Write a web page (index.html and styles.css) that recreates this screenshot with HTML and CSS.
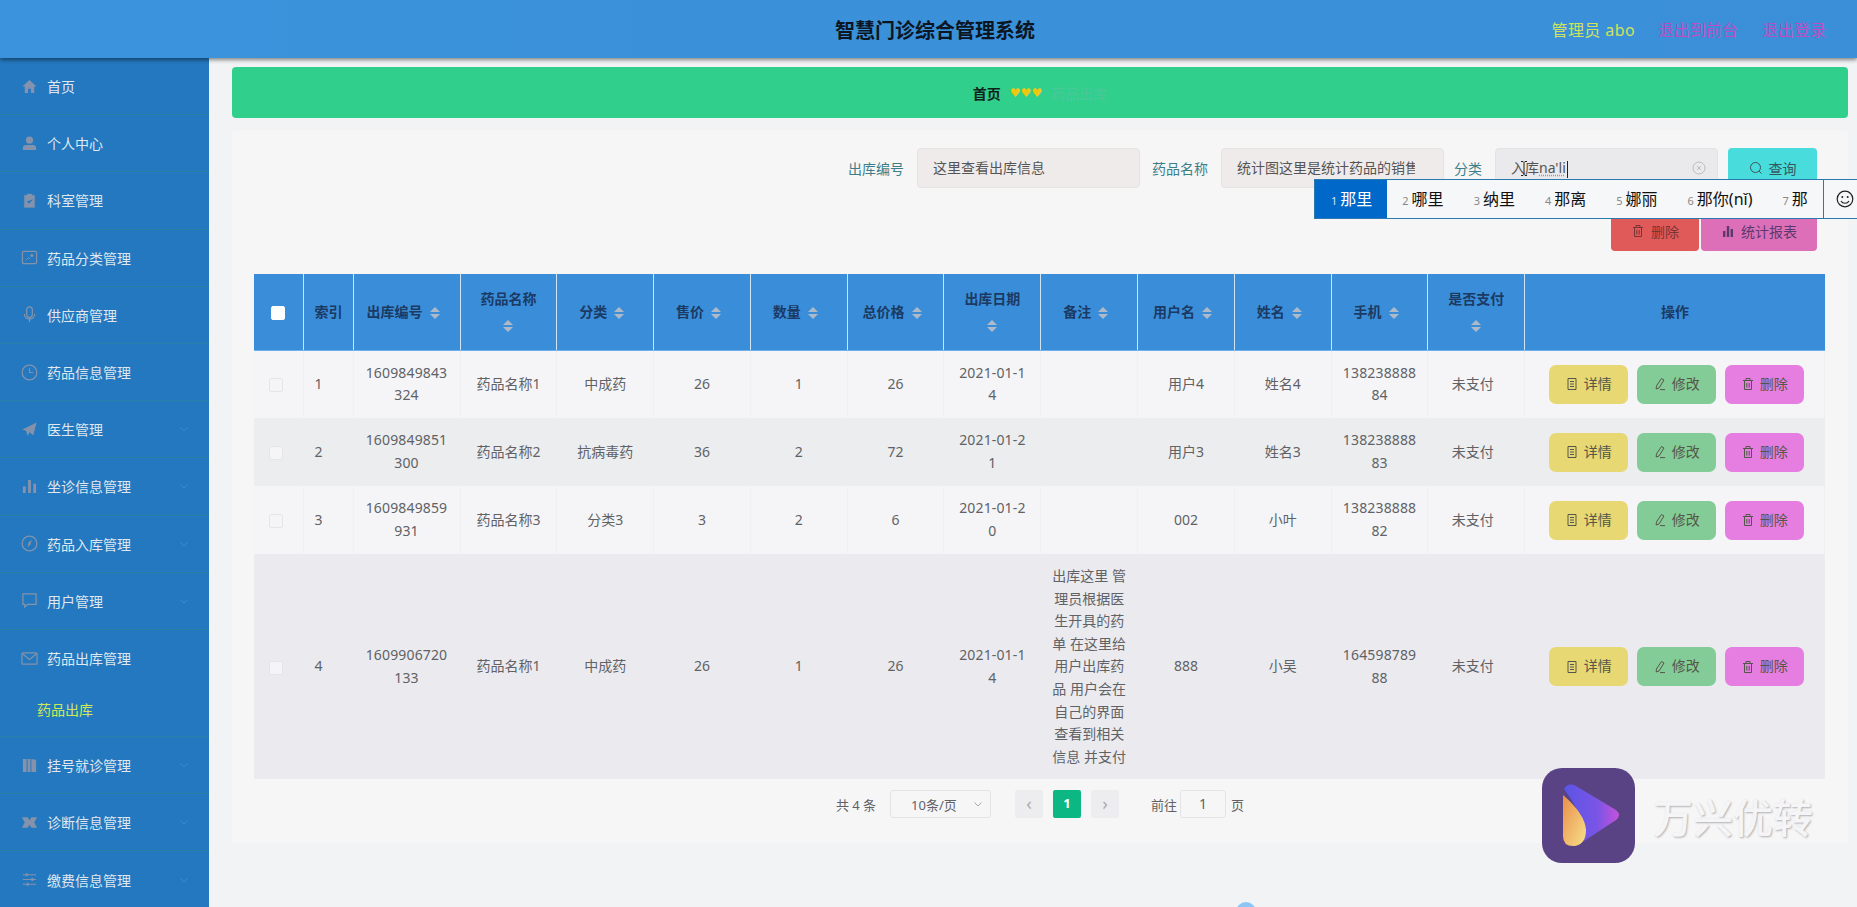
FILE: index.html
```html
<!DOCTYPE html>
<html lang="zh-CN">
<head>
    <meta charset="UTF-8">
    <meta name="viewport" content="width=device-width, initial-scale=1.0">
    <title>智慧门诊综合管理系统</title>
    <link rel="stylesheet" href="styles.css">
</head>
<body>
    <svg class="sprite" width="0" height="0">
        <symbol id="i-doc" viewBox="0 0 14 14"><path d="M3 1.500h8v11H3zM5 4.500h4M5 7h4M5 9.500h4" fill="none" stroke="currentColor"/></symbol>
        <symbol id="i-edit" viewBox="0 0 14 14"><path d="M8.500 1.500l2.500 1.500-5 8-2.800 1 .2-3zM7 12.600h5" fill="none" stroke="currentColor"/></symbol>
        <symbol id="i-trash" viewBox="0 0 14 14"><path d="M2 3.500h10M5 3.500V1.500h4v2M3.500 3.500v9h7v-9M5.800 6v4.500M8.200 6v4.500" fill="none" stroke="currentColor"/></symbol>
        <symbol id="i-chart" viewBox="0 0 14 14"><path d="M2 7h2.400v6H2zM5.800 2h2.400v11H5.800zM9.600 5H12v8H9.600z" fill="currentColor"/></symbol>
        <symbol id="i-search" viewBox="0 0 14 14"><circle cx="6.500" cy="6.500" r="5" fill="none" stroke="currentColor"/><path d="M10 10l2.500 2.500" stroke="currentColor"/></symbol>
        <symbol id="i-chev" viewBox="0 0 12 12"><path d="M2.500 4.500L6 8l3.500-3.500" fill="none" stroke="currentColor"/></symbol>
    </svg>

    <header class="topbar">
        <div></div>
        <h1 class="title">智慧门诊综合管理系统</h1>
        <div class="user-links">
            <span class="admin">管理员 abo</span>
            <a class="link">退出到前台</a>
            <a class="link">退出登录</a>
        </div>
    </header>

    <div class="layout">
        <nav class="sidebar">
            <div class="nav-item">
                <svg class="nav-icon" viewBox="0 0 18 18"><path d="M9 2L1.500 9H4v7h3.500v-4.500h3V16H14V9h2.500z" fill="currentColor"/></svg>首页
            </div>
            <div class="nav-item">
                <svg class="nav-icon" viewBox="0 0 18 18"><circle cx="9" cy="5.500" r="3.800" fill="currentColor"/><path d="M2 16v-2.500c0-2 1.500-3 3.500-3h7c2 0 3.500 1 3.500 3V16z" fill="currentColor"/></svg>个人中心
            </div>
            <div class="nav-item">
                <svg class="nav-icon" viewBox="0 0 18 18"><path d="M3 3h3V1.500h6V3h3v14H3zM6.500 10l2 2 3.500-4" fill="currentColor" stroke="#2478bf" stroke-width=".8"/></svg>科室管理
            </div>
            <div class="nav-item">
                <svg class="nav-icon" viewBox="0 0 18 18"><rect x="1.500" y="2.500" width="15" height="13" rx="1.500" fill="none" stroke="currentColor" stroke-width="1.300"/><circle cx="11.500" cy="7" r="1.600" fill="currentColor"/><path d="M5 12l3-3 2 2" fill="none" stroke="currentColor"/></svg>药品分类管理
            </div>
            <div class="nav-item">
                <svg class="nav-icon" viewBox="0 0 18 18"><rect x="6" y="1" width="6" height="11" rx="3" fill="none" stroke="currentColor" stroke-width="1.300"/><path d="M3.500 8.500c0 7 11 7 11 0M9 14v3" fill="none" stroke="currentColor" stroke-width="1.300"/></svg>供应商管理
            </div>
            <div class="nav-item">
                <svg class="nav-icon" viewBox="0 0 18 18"><circle cx="9" cy="9" r="7.800" fill="none" stroke="currentColor" stroke-width="1.300"/><path d="M9 4.500V9h4" fill="none" stroke="currentColor" stroke-width="1.200"/></svg>药品信息管理
            </div>
            <div class="nav-item has-sub">
                <svg class="nav-icon" viewBox="0 0 18 18"><path d="M16.500 1.500L13 15l-4-3-2 4-1.500-5.500L1.500 9z" fill="currentColor"/></svg>医生管理
                <svg class="nav-chev"><use href="#i-chev"/></svg>
            </div>
            <div class="nav-item has-sub">
                <svg class="nav-icon" viewBox="0 0 18 18"><path d="M2 9h3v7H2zM7.500 2h3v14h-3zM13 6h3v10h-3z" fill="currentColor"/></svg>坐诊信息管理
                <svg class="nav-chev"><use href="#i-chev"/></svg>
            </div>
            <div class="nav-item has-sub">
                <svg class="nav-icon" viewBox="0 0 18 18"><circle cx="9" cy="9" r="7.800" fill="none" stroke="currentColor" stroke-width="1.300"/><path d="M11.500 5L10 10l-3 3 1-5z" fill="currentColor"/></svg>药品入库管理
                <svg class="nav-chev"><use href="#i-chev"/></svg>
            </div>
            <div class="nav-item has-sub">
                <svg class="nav-icon" viewBox="0 0 18 18"><path d="M2 2h14v11H7l-3 3v-3H2z" fill="none" stroke="currentColor" stroke-width="1.300"/></svg>用户管理
                <svg class="nav-chev"><use href="#i-chev"/></svg>
            </div>
            <div class="nav-item open">
                <svg class="nav-icon" viewBox="0 0 18 18"><rect x="1" y="3" width="16" height="12" rx="1" fill="none" stroke="currentColor" stroke-width="1.300"/><path d="M1.500 4L9 10l7.500-6" fill="none" stroke="currentColor" stroke-width="1.300"/></svg>药品出库管理
            </div>
            <div class="nav-sub">药品出库</div>
            <div class="nav-item has-sub">
                <svg class="nav-icon" viewBox="0 0 18 18"><path d="M2 2h4v14H2zM7 2h3v14H7zM11 2l5 1v13h-5z" fill="currentColor"/></svg>挂号就诊管理
                <svg class="nav-chev"><use href="#i-chev"/></svg>
            </div>
            <div class="nav-item has-sub">
                <svg class="nav-icon" viewBox="0 0 18 18"><path d="M1 3.500h6l2 3 2-3h6l-3 5.500 3 5.500h-6l-2-3-2 3H1l3-5.500z" fill="currentColor"/></svg>诊断信息管理
                <svg class="nav-chev"><use href="#i-chev"/></svg>
            </div>
            <div class="nav-item has-sub">
                <svg class="nav-icon" viewBox="0 0 18 18"><path d="M2 4h14M2 9h14M2 14h14" stroke="currentColor" stroke-width="1.200"/><path d="M5 2.500h2v3H5zM11 7.500h2v3h-2zM6 12.500h2v3H6z" fill="currentColor"/></svg>缴费信息管理
                <svg class="nav-chev"><use href="#i-chev"/></svg>
            </div>
        </nav>

        <main class="main">
            <div class="crumb">
                <b>首页</b>
                <span class="hearts">♥♥♥</span>
                <span class="crumb-now">药品出库</span>
            </div>

            <section class="panel">
                <div class="search-row">
                    <label class="field-label">出库编号</label>
                    <div class="field field-first">这里查看出库信息</div>
                    <label class="field-label">药品名称</label>
                    <div class="field field-clip"><span>统计图这里是统计药品的销售情况</span></div>
                    <label class="field-label">分类</label>
                    <div class="field field-active">
                        <span>入库<u>na'li</u></span><i class="caret"></i>
                        <svg class="ibeam" viewBox="0 0 8 16"><path d="M1 1h2l1 1 1-1h2M4 2v12M1 15h2l1-1 1 1h2" fill="none" stroke="#222"/></svg>
                        <svg class="clear" viewBox="0 0 14 14"><circle cx="7" cy="7" r="6" fill="none" stroke="#bbb"/><path d="M5 5l4 4M9 5l-4 4" stroke="#bbb"/></svg>
                    </div>
                    <button class="btn btn-query"><svg class="btn-icon"><use href="#i-search"/></svg>查询</button>
                </div>
                <div class="tool-row">
                    <button class="btn btn-remove"><svg class="btn-icon"><use href="#i-trash"/></svg>删除</button>
                    <button class="btn btn-report"><svg class="btn-icon"><use href="#i-chart"/></svg>统计报表</button>
                </div>

                <table class="data-table">
                    <colgroup>
                        <col class="col-check"><col class="col-idx"><col class="col-id">
                        <col class="col-n"><col class="col-n"><col class="col-n"><col class="col-n"><col class="col-n"><col class="col-n">
                        <col class="col-n"><col class="col-n"><col class="col-n"><col class="col-n"><col class="col-n">
                        <col class="col-ops">
                    </colgroup>
                    <thead>
                        <tr>
                            <th><span class="check check-head"></span></th>
                            <th class="left">索引</th>
                            <th>出库编号<span class="sort"></span></th>
                            <th>药品名称<span class="sort"></span></th>
                            <th>分类<span class="sort"></span></th>
                            <th>售价<span class="sort"></span></th>
                            <th>数量<span class="sort"></span></th>
                            <th>总价格<span class="sort"></span></th>
                            <th>出库日期<span class="sort"></span></th>
                            <th>备注<span class="sort"></span></th>
                            <th>用户名<span class="sort"></span></th>
                            <th>姓名<span class="sort"></span></th>
                            <th>手机<span class="sort"></span></th>
                            <th>是否支付<span class="sort"></span></th>
                            <th>操作</th>
                        </tr>
                    </thead>
                    <tbody>
                        <tr>
                            <td><span class="check"></span></td>
                            <td class="left">1</td>
                            <td class="num">1609849843<br>324</td>
                            <td>药品名称1</td>
                            <td>中成药</td>
                            <td>26</td>
                            <td>1</td>
                            <td>26</td>
                            <td class="num">2021-01-1<br>4</td>
                            <td></td>
                            <td>用户4</td>
                            <td>姓名4</td>
                            <td class="num">138238888<br>84</td>
                            <td class="pay">未支付</td>
                            <td class="ops">
                                <button class="act act-view"><svg class="btn-icon"><use href="#i-doc"/></svg>详情</button>
                                <button class="act act-edit"><svg class="btn-icon"><use href="#i-edit"/></svg>修改</button>
                                <button class="act act-del"><svg class="btn-icon"><use href="#i-trash"/></svg>删除</button>
                            </td>
                        </tr>
                        <tr>
                            <td><span class="check"></span></td>
                            <td class="left">2</td>
                            <td class="num">1609849851<br>300</td>
                            <td>药品名称2</td>
                            <td>抗病毒药</td>
                            <td>36</td>
                            <td>2</td>
                            <td>72</td>
                            <td class="num">2021-01-2<br>1</td>
                            <td></td>
                            <td>用户3</td>
                            <td>姓名3</td>
                            <td class="num">138238888<br>83</td>
                            <td class="pay">未支付</td>
                            <td class="ops">
                                <button class="act act-view"><svg class="btn-icon"><use href="#i-doc"/></svg>详情</button>
                                <button class="act act-edit"><svg class="btn-icon"><use href="#i-edit"/></svg>修改</button>
                                <button class="act act-del"><svg class="btn-icon"><use href="#i-trash"/></svg>删除</button>
                            </td>
                        </tr>
                        <tr>
                            <td><span class="check"></span></td>
                            <td class="left">3</td>
                            <td class="num">1609849859<br>931</td>
                            <td>药品名称3</td>
                            <td>分类3</td>
                            <td>3</td>
                            <td>2</td>
                            <td>6</td>
                            <td class="num">2021-01-2<br>0</td>
                            <td></td>
                            <td>002</td>
                            <td>小叶</td>
                            <td class="num">138238888<br>82</td>
                            <td class="pay">未支付</td>
                            <td class="ops">
                                <button class="act act-view"><svg class="btn-icon"><use href="#i-doc"/></svg>详情</button>
                                <button class="act act-edit"><svg class="btn-icon"><use href="#i-edit"/></svg>修改</button>
                                <button class="act act-del"><svg class="btn-icon"><use href="#i-trash"/></svg>删除</button>
                            </td>
                        </tr>
                        <tr>
                            <td><span class="check"></span></td>
                            <td class="left">4</td>
                            <td class="num">1609906720<br>133</td>
                            <td>药品名称1</td>
                            <td>中成药</td>
                            <td>26</td>
                            <td>1</td>
                            <td>26</td>
                            <td class="num">2021-01-1<br>4</td>
                            <td>出库这里 管<br>理员根据医<br>生开具的药<br>单 在这里给<br>用户出库药<br>品 用户会在<br>自己的界面<br>查看到相关<br>信息 并支付</td>
                            <td>888</td>
                            <td>小吴</td>
                            <td class="num">164598789<br>88</td>
                            <td class="pay">未支付</td>
                            <td class="ops">
                                <button class="act act-view"><svg class="btn-icon"><use href="#i-doc"/></svg>详情</button>
                                <button class="act act-edit"><svg class="btn-icon"><use href="#i-edit"/></svg>修改</button>
                                <button class="act act-del"><svg class="btn-icon"><use href="#i-trash"/></svg>删除</button>
                            </td>
                        </tr>
                    </tbody>
                </table>

                <div class="pager">
                    <span class="pager-total">共 4 条</span>
                    <div class="pager-size">10条/页<svg class="pager-chev"><use href="#i-chev"/></svg></div>
                    <span class="page-btn page-arrow">‹</span>
                    <span class="page-btn page-on">1</span>
                    <span class="page-btn page-arrow">›</span>
                    <span class="pager-goto">前往</span>
                    <span class="pager-input">1</span>
                    <span>页</span>
                </div>
            </section>
        </main>
    </div>

    <!-- 输入法候选框 -->
    <div class="ime">
        <div class="ime-item ime-on"><small>1</small>那里</div>
        <div class="ime-item"><small>2</small>哪里</div>
        <div class="ime-item"><small>3</small>纳里</div>
        <div class="ime-item"><small>4</small>那离</div>
        <div class="ime-item"><small>5</small>娜丽</div>
        <div class="ime-item"><small>6</small>那你(nǐ)</div>
        <div class="ime-item"><small>7</small>那</div>
        <div class="ime-emoji">
            <svg viewBox="0 0 18 18" width="18" height="18"><circle cx="9" cy="9" r="7.800" fill="none" stroke="#222" stroke-width="1.200"/><circle cx="6.300" cy="7" r="1" fill="#222"/><circle cx="11.700" cy="7" r="1" fill="#222"/><path d="M5 11c1.500 3 6.500 3 8 0" fill="none" stroke="#222" stroke-width="1.200"/></svg>
        </div>
    </div>

    <!-- 录屏水印 -->
    <div class="watermark">
        <svg class="wm-logo" viewBox="0 0 93 95">
            <defs>
                <linearGradient id="wm-a" x1="0" y1="0" x2="1" y2="0"><stop offset="0" stop-color="#5a55e6"/><stop offset=".6" stop-color="#7a55e6"/><stop offset="1" stop-color="#c552dc"/></linearGradient>
                <linearGradient id="wm-b" x1="0" y1="0" x2="1" y2="1"><stop offset="0" stop-color="#e88e4a"/><stop offset="1" stop-color="#f8e08a"/></linearGradient>
            </defs>
            <rect width="93" height="95" rx="20" fill="#5a4384"/>
            <path d="M22 21Q26 14 34 18L74 42Q80 47 74 52L42 73Q44 50 22 21Z" fill="url(#wm-a)"/>
            <path d="M21 27Q43 46 44 62Q44 76 33 78Q21 79 21 68Z" fill="url(#wm-b)"/>
        </svg>
        <span class="wm-text">万兴优转</span>
    </div>
    <div class="blue-dot"></div>
</body>
</html>
```

FILE: styles.css
```css
*{
    box-sizing: border-box;
}
html,body{
    margin: 0;
    height: 907px;
    overflow: hidden;
}
body{
    position: relative;
    font-family: "Noto Sans", "Noto Sans CJK SC", sans-serif;
    font-size: 14px;
    color: #606266;
    background-color: #f2f3f5;
}
.sprite{
    display: block;
    height: 0;
}

/* 顶部 */
.topbar{
    position: relative;
    z-index: 2;
    height: 58px;
    padding: 0 31px 0 44px;
    display: grid;
    grid-template-columns: 1fr auto 1fr;
    align-items: center;
    background: linear-gradient(90deg, #3a93dc, #3a8fd8);
    box-shadow: 0 2px 4px rgba(0,0,0,.45);
}
.title{
    margin: 0;
    font-size: 20px;
    font-weight: 700;
    color: #0c1622;
}
.user-links{
    display: flex;
    justify-content: flex-end;
    gap: 24px;
    font-size: 16px;
}
.admin{
    margin-right: -1px;
    letter-spacing: .4px;
    color: #cfe25c;
}
.link{
    color: #b94fc4;
}

/* 左侧菜单 */
.layout{
    display: flex;
    height: 849px;
}
.sidebar{
    flex: none;
    width: 209px;
    overflow: hidden;
    background-color: #2478bf;
    color: #dfe7ef;
}
.nav-item{
    height: 57.2px;
    padding-left: 21px;
    display: flex;
    align-items: center;
    border-bottom: 1px solid #2a7fa4;
}
.nav-item.open{
    border-bottom: 0;
}
.nav-icon{
    flex: none;
    width: 17px;
    height: 17px;
    margin-right: 9px;
    color: #8493ab;
}
.nav-chev{
    width: 12px;
    height: 12px;
    margin-left: auto;
    margin-right: 19px;
    color: #3a8bc9;
}
.nav-sub{
    height: 50px;
    padding-left: 37px;
    line-height: 46px;
    color: #cfe85a;
    border-bottom: 1px solid #2a7fa4;
}

/* 内容 */
.main{
    flex: 1;
    min-width: 0;
    padding: 9px 9px 0 23px;
}
.crumb{
    height: 51px;
    display: flex;
    justify-content: center;
    align-items: center;
    gap: 9px;
    border-radius: 4px;
    background-color: #30cf8c;
    color: #10211a;
}
.hearts{
    font-family: "DejaVu Sans", sans-serif;
    font-size: 12px;
    letter-spacing: .1px;
    color: #efc70f;
}
.crumb-now{
    color: #4bc79c;
}
.panel{
    height: 713px;
    margin-top: 12px;
    padding: 18px 22px 0 22px;
    background-color: #f6f6f7;
    border-radius: 4px;
}
.search-row{
    display: flex;
    justify-content: flex-end;
    align-items: center;
    padding-right: 9px;
}
.field-label{
    margin-right: 13px;
    color: #3d7f88;
}
.field{
    position: relative;
    width: 223px;
    height: 40px;
    margin-right: 10px;
    padding: 0 15px;
    line-height: 38px;
    white-space: nowrap;
    overflow: hidden;
    border: 1px solid #e4e2e3;
    border-radius: 4px;
    background-color: #efebeb;
    color: #555;
}
.field-first{
    margin-right: 12px;
}
.field-clip span{
    display: block;
    width: 178px;
    overflow: hidden;
}
.field-active{
    background-color: #eae9eb;
}
.field-active u{
    text-decoration: underline dotted #999;
    text-underline-offset: 2px;
}
.caret{
    display: inline-block;
    width: 1px;
    height: 17px;
    margin-left: 1px;
    vertical-align: middle;
    background-color: #222;
}
.ibeam{
    position: absolute;
    left: 24px;
    top: 11px;
    width: 8px;
    height: 17px;
}
.clear{
    position: absolute;
    right: 11px;
    top: 12px;
    width: 14px;
    height: 14px;
}
.btn{
    height: 40px;
    display: inline-flex;
    justify-content: center;
    align-items: center;
    gap: 6px;
    padding: 0;
    border: 0;
    border-radius: 4px;
    font: inherit;
}
.btn-icon{
    flex: none;
    width: 14px;
    height: 14px;
}
.btn-query{
    width: 89px;
    background-color: #49dcdc;
    color: #35585e;
}
.tool-row{
    display: flex;
    justify-content: flex-end;
    gap: 2px;
    margin-top: 23px;
    padding-right: 9px;
}
.btn-remove{
    width: 88px;
    background-color: #e05a5a;
    color: #7a3434;
}
.btn-report{
    width: 116px;
    background-color: #dd6fb8;
    color: #5b3a6b;
}

/* 表格 */
.data-table{
    width: 1571px;
    margin-top: 23px;
    table-layout: fixed;
    border-collapse: collapse;
}
.col-check{ width: 49px; }
.col-idx{ width: 50px; }
.col-id{ width: 107px; }
.col-n{ width: 96.8px; }
.col-ops{ width: 300.2px; }
.data-table th{
    height: 76px;
    padding: 0 10px;
    line-height: 26px;
    font-weight: 700;
    text-align: center;
    color: #1b3a64;
    background-color: #3a8ed9;
    border-right: 1px solid #cfe4f7;
    border-bottom: 1px solid #6fb0ea;
}
.data-table th:last-child{
    border-right: 0;
}
.data-table td{
    height: 68px;
    padding: 11px 4px;
    line-height: 22.6px;
    text-align: center;
    white-space: nowrap;
    background-color: #f5f5f7;
    border-right: 1px solid #f0f0f2;
}
.data-table tbody tr:nth-child(even) td{
    background-color: #ecedef;
    border-right-color: #ecedef;
}
.data-table tbody tr:last-child td{
    background-color: #ebebef;
    border-right-color: #ebebef;
}
.data-table .left{
    padding-left: 11px;
    text-align: left;
}
.data-table .pay{
    padding-right: 11px;
}
.num{
    letter-spacing: .15px;
}
.sort{
    display: inline-flex;
    flex-direction: column;
    align-items: center;
    gap: 2px;
    width: 24px;
    height: 12px;
    vertical-align: middle;
}
.sort::before,.sort::after{
    content: "";
    width: 0;
    height: 0;
    border-left: 5px solid transparent;
    border-right: 5px solid transparent;
}
.sort::before{
    border-bottom: 5px solid #aebac8;
}
.sort::after{
    border-top: 5px solid #aebac8;
}
.check{
    display: inline-block;
    width: 14px;
    height: 14px;
    margin-right: 5px;
    vertical-align: middle;
    border: 1px solid #e5e5e8;
    border-radius: 2px;
    background-color: #f5f5f7;
}
.check-head{
    margin-right: 0;
    border-color: #fff;
    background-color: #fff;
}
.data-table .ops{
    padding: 0 0 0 3px;
    font-size: 0;
}
.act{
    width: 79px;
    height: 39px;
    margin: 0 4.5px;
    padding: 0;
    display: inline-flex;
    justify-content: center;
    align-items: center;
    gap: 5px;
    border: 0;
    border-radius: 7px;
    font: inherit;
    font-size: 14px;
    color: #55564a;
    vertical-align: middle;
}
.act-view{
    background-color: #e7d873;
}
.act-edit{
    background-color: #83cc97;
}
.act-del{
    background-color: #e57ee0;
}

/* 分页 */
.pager{
    display: flex;
    justify-content: center;
    align-items: center;
    height: 28px;
    margin-top: 11px;
    font-size: 13px;
}
.pager-total{
    margin-right: 14px;
}
.pager-size{
    width: 101px;
    height: 28px;
    margin-right: 24px;
    padding: 0 6px 0 20px;
    display: flex;
    justify-content: space-between;
    align-items: center;
    border: 1px solid #e4e4e7;
    border-radius: 3px;
}
.pager-chev{
    width: 12px;
    height: 12px;
    color: #aaa;
}
.page-btn{
    width: 28px;
    height: 28px;
    margin-right: 10px;
    line-height: 26px;
    text-align: center;
    border-radius: 2px;
    background-color: #ededef;
    color: #aaa;
}
.page-arrow{
    font-size: 18px;
}
.page-on{
    background-color: #0db784;
    color: #fff;
    font-weight: 700;
}
.pager-goto{
    margin-left: 22px;
    margin-right: 3px;
}
.pager-input{
    width: 46px;
    height: 28px;
    margin-right: 5px;
    line-height: 26px;
    font-size: 14px;
    text-align: center;
    border: 1px solid #e4e4e7;
    border-radius: 3px;
}

/* 输入法 */
.ime{
    position: absolute;
    left: 1314px;
    top: 179px;
    z-index: 5;
    display: flex;
    height: 40px;
    width: 560px;
    align-items: stretch;
    font-size: 16px;
    line-height: 38px;
    color: #111;
    background-color: #f6f7f8;
    border: 1px solid #2a7ab0;
}
.ime-item{
    padding: 0 15px;
    white-space: nowrap;
}
.ime-item small{
    margin-right: 3px;
    font-size: 11px;
    color: #888;
}
.ime-on{
    padding-left: 16px;
    background-color: #0068c8;
    color: #fff;
}
.ime-on small{
    color: #cfe2f5;
}
.ime-emoji{
    padding-left: 12px;
    display: flex;
    align-items: center;
    border-left: 1px solid #2a7ab0;
}

/* 水印 */
.watermark{
    position: absolute;
    left: 1542px;
    top: 768px;
    z-index: 4;
    display: flex;
    align-items: center;
    gap: 18px;
}
.wm-logo{
    flex: none;
    width: 93px;
    height: 95px;
}
.wm-text{
    font-size: 40px;
    font-weight: 500;
    white-space: nowrap;
    color: #f5f5f7;
    text-shadow: 1px 1px 2px #b0b0b4;
}
.blue-dot{
    position: absolute;
    left: 1236px;
    top: 902px;
    width: 20px;
    height: 20px;
    border-radius: 50%;
    background-color: #8cc6f6;
}
```
